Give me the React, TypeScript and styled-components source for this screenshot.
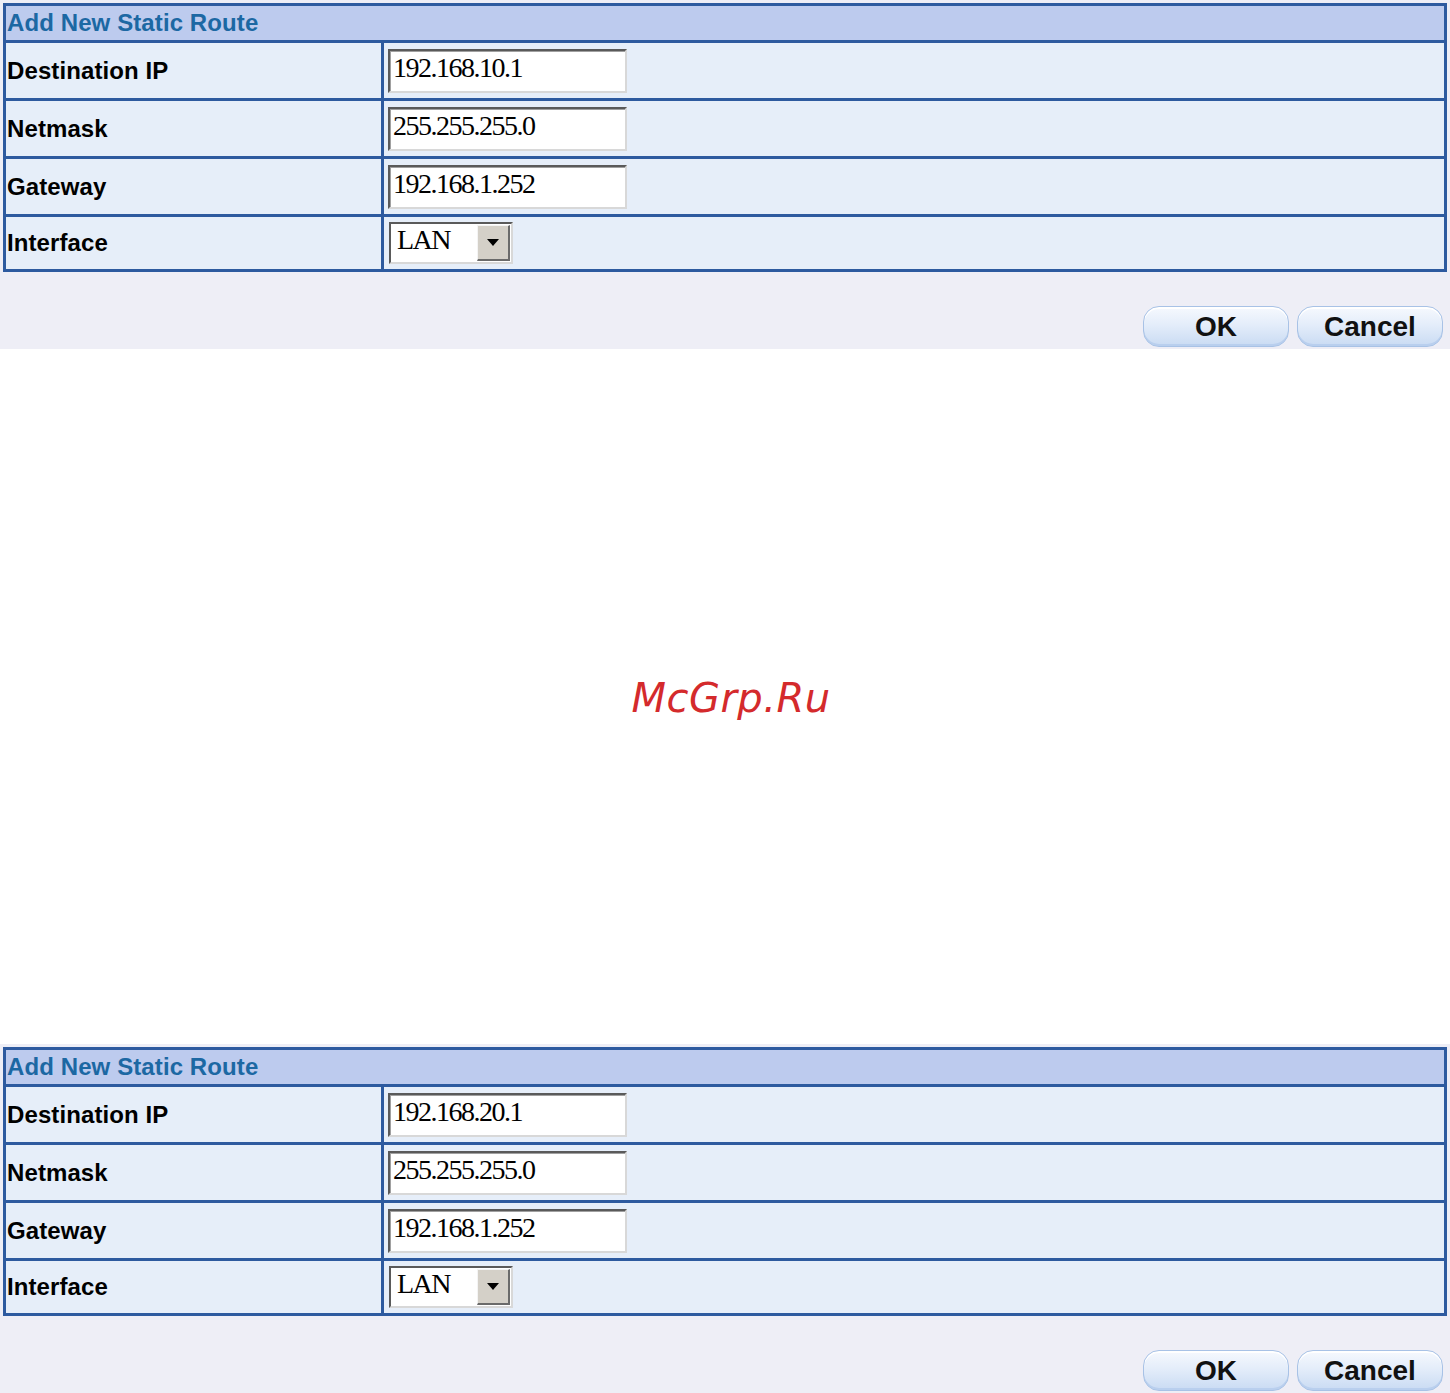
import React from "react";
import styled, { createGlobalStyle } from "styled-components";

const Global = createGlobalStyle`
  html, body { margin: 0; padding: 0; background: #ffffff; }
  body { font-family: "Liberation Sans", Arial, sans-serif; }
`;

const Page = styled.div`
  width: 1450px;
  display: flex;
  flex-direction: column;
`;

const Panel = styled.section`
  box-sizing: border-box;
  height: 349px;
  background: #eeeef6;
  padding: 3px 3px 2px 3px;
  display: flex;
  flex-direction: column;
`;

const Table = styled.div`
  display: grid;
  grid-template-columns: 375px 1fr;
  grid-template-rows: 34px 55px 55px 55px 52px;
  gap: 3px;
  padding: 3px;
  background: #2d5a9f;
`;

const Header = styled.div`
  grid-column: 1 / span 2;
  background: #bdcbee;
  color: #1c68a3;
  font: bold 24px "Liberation Sans", Arial, sans-serif;
  letter-spacing: 0.1px;
  display: flex;
  align-items: center;
  padding-left: 1px;
`;

const Label = styled.div`
  background: #e6eef9;
  color: #000;
  font: bold 24px "Liberation Sans", Arial, sans-serif;
  letter-spacing: 0.1px;
  display: flex;
  align-items: center;
  padding-left: 1px;
`;

const Value = styled.div`
  background: #e6eef9;
  display: flex;
  align-items: center;
  padding-left: 4px;
`;

const TextBox = styled.div`
  box-sizing: border-box;
  width: 239px;
  height: 44px;
  background: #fff;
  border-top: 2px solid #5a5a5a;
  border-left: 2px solid #5a5a5a;
  border-right: 2px solid #d8d8d8;
  border-bottom: 2px solid #d8d8d8;
  box-shadow: inset 1px 1px 0 #a0a0a0;
  font: 28px "Liberation Serif", "Times New Roman", serif;
  letter-spacing: -1.5px;
  color: #000;
  display: flex;
  align-items: center;
  padding: 0 0 6px 3px;
`;

const Select = styled.div`
  box-sizing: border-box;
  width: 124px;
  height: 42px;
  margin-left: 1px;
  background: #fff;
  border-top: 2px solid #5a5a5a;
  border-left: 2px solid #5a5a5a;
  border-right: 2px solid #d8d8d8;
  border-bottom: 2px solid #d8d8d8;
  display: flex;
  align-items: stretch;
`;

const SelectText = styled.div`
  flex: 1;
  font: 28px "Liberation Serif", "Times New Roman", serif;
  letter-spacing: -1.5px;
  color: #000;
  display: flex;
  align-items: center;
  padding: 0 0 6px 6px;
`;

const Arrow = styled.div`
  box-sizing: border-box;
  width: 33px;
  margin: 1px 1px 1px 0;
  background: #d4d0c8;
  border-top: 1px solid #f4f4f4;
  border-left: 1px solid #f4f4f4;
  border-right: 2px solid #6a6a6a;
  border-bottom: 2px solid #6a6a6a;
  display: flex;
  align-items: center;
  justify-content: center;
`;

const ButtonRow = styled.div`
  display: flex;
  justify-content: flex-end;
  gap: 8px;
  margin-top: 34px;
  margin-right: 4px;
`;

const Button = styled.button`
  box-sizing: border-box;
  width: 146px;
  height: 41px;
  border-radius: 16px;
  border: 1px solid #a8c2e6;
  background: linear-gradient(#f6f9fe 0%, #e4edfa 45%, #c9dbf3 100%);
  box-shadow: inset 0 2px 0 #ffffff, inset 0 -2px 0 #b9cfee;
  font: bold 28px "Liberation Sans", Arial, sans-serif;
  color: #111;
  padding: 0;
  display: flex;
  align-items: center;
  justify-content: center;
`;

const Gap = styled.div`
  height: 695px;
  display: flex;
  align-items: center;
  justify-content: center;
`;

const Watermark = styled.div`
  font: oblique 40px "DejaVu Sans", sans-serif;
  color: #d42a2c;
  letter-spacing: 0.5px;
  padding-left: 12px;
  padding-top: 2px;
`;

type Route = { dest: string };

const RoutePanel: React.FC<Route> = ({ dest }) => (
  <Panel>
    <Table>
      <Header>Add New Static Route</Header>
      <Label>Destination IP</Label>
      <Value>
        <TextBox>{dest}</TextBox>
      </Value>
      <Label>Netmask</Label>
      <Value>
        <TextBox>255.255.255.0</TextBox>
      </Value>
      <Label>Gateway</Label>
      <Value>
        <TextBox>192.168.1.252</TextBox>
      </Value>
      <Label>Interface</Label>
      <Value>
        <Select>
          <SelectText>LAN</SelectText>
          <Arrow>
            <svg width="12" height="7" viewBox="0 0 12 7">
              <path d="M0 0 H12 L6 7 Z" fill="#000" />
            </svg>
          </Arrow>
        </Select>
      </Value>
    </Table>
    <ButtonRow>
      <Button>OK</Button>
      <Button>Cancel</Button>
    </ButtonRow>
  </Panel>
);

export default function App() {
  return (
    <Page>
      <Global />
      <RoutePanel dest="192.168.10.1" />
      <Gap>
        <Watermark>McGrp.Ru</Watermark>
      </Gap>
      <RoutePanel dest="192.168.20.1" />
    </Page>
  );
}
